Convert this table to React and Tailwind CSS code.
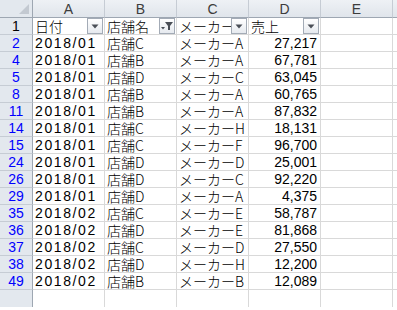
import React from "react";

const rows = [
  ["2", "2018/01", "店舗C", "メーカーA", "27,217"],
  ["4", "2018/01", "店舗B", "メーカーA", "67,781"],
  ["5", "2018/01", "店舗D", "メーカーC", "63,045"],
  ["8", "2018/01", "店舗B", "メーカーA", "60,765"],
  ["11", "2018/01", "店舗B", "メーカーA", "87,832"],
  ["14", "2018/01", "店舗C", "メーカーH", "18,131"],
  ["15", "2018/01", "店舗C", "メーカーF", "96,700"],
  ["24", "2018/01", "店舗D", "メーカーD", "25,001"],
  ["26", "2018/01", "店舗D", "メーカーC", "92,220"],
  ["29", "2018/01", "店舗D", "メーカーA", "4,375"],
  ["35", "2018/02", "店舗C", "メーカーE", "58,787"],
  ["36", "2018/02", "店舗D", "メーカーE", "81,868"],
  ["37", "2018/02", "店舗C", "メーカーD", "27,550"],
  ["38", "2018/02", "店舗D", "メーカーH", "12,200"],
  ["49", "2018/02", "店舗B", "メーカーB", "12,089"],
];

const jp = { fontFamily: '"Noto Sans CJK JP", "Liberation Sans", sans-serif' };
const lat = { fontFamily: '"Liberation Sans", "Noto Sans CJK JP", sans-serif' };

function DropBtn({ filtered }) {
  return (
    <div className="absolute right-[1px] top-[0px] w-[16px] h-[16px] border border-[#a3abb6] bg-gradient-to-b from-[#ffffff] to-[#e6eaef] flex items-center justify-center">
      {filtered ? (
        <svg width="12" height="10" viewBox="0 0 12 10">
          <path d="M4 1h8L9 5v4H7V5z" fill="#4a4f57" />
          <path d="M0 6h4L2 8.5z" fill="#4a4f57" />
        </svg>
      ) : (
        <svg width="8" height="5" viewBox="0 0 8 5">
          <path d="M0.5 0.5h7L4 4.5z" fill="#4a4f57" />
        </svg>
      )}
    </div>
  );
}

const cell = "w-[72px] h-[17px] shrink-0 border-r border-b border-[#d9d9d9] flex items-center leading-[16px] whitespace-nowrap text-black";

export default function App() {
  const cols = ["A", "B", "C", "D", "E"];
  const headers = ["日付", "店舗名", "メーカー", "売上"];
  return (
    <div className="w-[397px] h-[310px] overflow-hidden bg-white">
      {/* column header row */}
      <div className="flex h-[18px]">
        <div className="w-[33px] h-[18px] shrink-0 bg-[#e3e8ee] border-r border-b border-[#9ea7b2] relative">
          <svg className="absolute right-[3px] bottom-[3px]" width="10" height="10" viewBox="0 0 10 10">
            <path d="M10 0V10H0z" fill="#c3c9d1" />
          </svg>
        </div>
        {cols.map((c) => (
          <div
            key={c}
            style={lat}
            className="w-[72px] h-[18px] shrink-0 bg-gradient-to-b from-[#eef1f5] to-[#e0e5eb] border-r border-[#c6ccd4] border-b border-b-[#9ea7b2] flex items-center justify-center text-[14px] text-[#3c3c3c] leading-[16px]"
          >
            {c}
          </div>
        ))}
        <div className="flex-1 h-[18px] bg-gradient-to-b from-[#eef1f5] to-[#e0e5eb] border-b border-[#9ea7b2]" />
      </div>
      {/* row 1 */}
      <div className="flex h-[17px]">
        <div style={lat} className="w-[33px] h-[17px] shrink-0 bg-[#e3e8ee] border-r border-[#9ea7b2] border-b border-b-[#c6ccd4] flex items-center justify-center text-[14px] text-black leading-[16px]">
          1
        </div>
        {cols.map((c, i) => (
          <div key={c} style={jp} className={`relative ${cell} pl-[2px] text-[14px] font-light`}>
            {headers[i] && <span>{headers[i]}</span>}
            {headers[i] && <DropBtn filtered={i === 1} />}
          </div>
        ))}
        <div className="flex-1 h-[17px] border-b border-[#d9d9d9]" />
      </div>
      {rows.map((r) => (
        <div key={r[0]} className="flex h-[17px]">
          <div style={lat} className="w-[33px] h-[17px] shrink-0 bg-[#e3e8ee] border-r border-[#9ea7b2] border-b border-b-[#c6ccd4] flex items-center justify-center text-[14px] text-[#0000ff] leading-[16px]">
            {r[0]}
          </div>
          <div style={lat} className={`${cell} pl-[2px] text-[14px] tracking-[1.6px]`}>
            {r[1]}
          </div>
          <div style={jp} className={`${cell} pl-[2px] text-[14px] font-light`}>
            {r[2]}
          </div>
          <div style={jp} className={`${cell} pl-[2px] text-[14px] font-light`}>
            {r[3]}
          </div>
          <div style={lat} className={`${cell} pr-[3px] justify-end text-[14px]`}>
            {r[4]}
          </div>
          <div className={cell} />
          <div className="flex-1 h-[17px] border-b border-[#d9d9d9]" />
        </div>
      ))}
      <div className="flex h-[17px]">
        <div className="w-[33px] h-[17px] shrink-0 bg-[#e3e8ee] border-r border-[#9ea7b2]" />
        {cols.map((c) => (
          <div key={c} className="w-[72px] h-[17px] shrink-0 border-r border-[#d9d9d9]" />
        ))}
      </div>
    </div>
  );
}
